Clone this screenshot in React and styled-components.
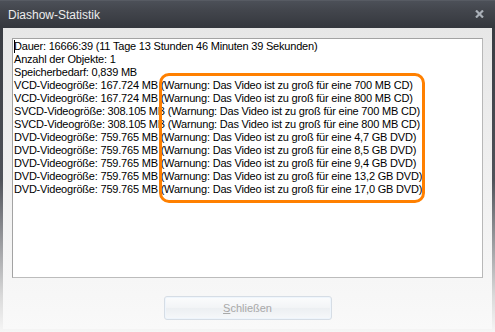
import React from "react";
import styled, { createGlobalStyle } from "styled-components";

const Global = createGlobalStyle`
  html, body { margin: 0; padding: 0; background: #ffffff; }
  body { width: 495px; height: 332px; overflow: hidden; }
`;

const Window = styled.div`
  width: 495px;
  height: 332px;
  display: flex;
  flex-direction: column;
  background: #3b3e45;
  font-family: "Liberation Sans", Arial, sans-serif;
`;

const TitleBar = styled.div`
  height: 28px;
  flex: none;
  display: flex;
  align-items: center;
  justify-content: space-between;
  padding: 0 9px 0 8px;
  box-sizing: border-box;
  background: linear-gradient(#62666e 0px, #4c5058 1px, #43464d 10px, #35383e 27px);
`;

const Title = styled.span`
  color: #ececec;
  font-size: 12px;
  padding-top: 2px;
`;

const CloseIcon = styled.svg`
  width: 9px;
  height: 8px;
  margin-right: 2px;
`;

const Frame = styled.div`
  flex: 1;
  display: flex;
  padding: 0 3px 3px 3px;
  background: linear-gradient(#393c42 0%, #50535a 50%, #d9d9d9 88%, #f6f6f6 100%);
  min-height: 0;
`;

const Body = styled.div`
  flex: 1;
  display: flex;
  flex-direction: column;
  align-items: center;
  padding: 10px 9px 9px 9px;
  background: linear-gradient(#e7e7e7, #f9f9f9);
`;

const TextBox = styled.div`
  position: relative;
  align-self: stretch;
  height: 240px;
  box-sizing: border-box;
  border: 1px solid #a3a3a3;
  border-right-color: #b8b8b8;
  border-bottom-color: #bcbcbc;
  background: #ffffff;
  padding: 1px 1px;
  font-size: 11px;
  letter-spacing: -0.2px;
  line-height: 13px;
  color: #000;
  overflow: hidden;
`;

const Line = styled.div`
  white-space: nowrap;
`;

const Caret = styled.span`
  display: inline-block;
  width: 0;
  height: 13px;
  border-left: 1px solid #000;
  margin-right: -1px;
  vertical-align: top;
`;

const Highlight = styled.div`
  position: absolute;
  left: 146px;
  top: 34px;
  width: 266px;
  height: 130px;
  box-sizing: border-box;
  border: 3px solid #ff8000;
  border-radius: 10px;
  pointer-events: none;
`;

const Button = styled.button`
  margin-top: 18px;
  width: 168px;
  height: 24px;
  box-sizing: border-box;
  border: 1px solid #d6dde5;
  border-radius: 3px;
  background: linear-gradient(#fbfcfd, #f2f4f6 50%, #eceff2 51%, #f6f8fa);
  box-shadow: inset 0 0 0 1px #eef5fc;
  color: #a8a8a8;
  font-family: "Liberation Sans", Arial, sans-serif;
  font-size: 11px;
  padding: 0;
  cursor: default;
`;

const Mnemonic = styled.span`
  text-decoration: underline;
`;

const lines = [
  "Anzahl der Objekte: 1",
  "Speicherbedarf: 0,839 MB",
  "VCD-Videogröße: 167.724 MB (Warnung: Das Video ist zu groß für eine 700 MB CD)",
  "VCD-Videogröße: 167.724 MB (Warnung: Das Video ist zu groß für eine 800 MB CD)",
  "SVCD-Videogröße: 308.105 MB (Warnung: Das Video ist zu groß für eine 700 MB CD)",
  "SVCD-Videogröße: 308.105 MB (Warnung: Das Video ist zu groß für eine 800 MB CD)",
  "DVD-Videogröße: 759.765 MB (Warnung: Das Video ist zu groß für eine 4,7 GB DVD)",
  "DVD-Videogröße: 759.765 MB (Warnung: Das Video ist zu groß für eine 8,5 GB DVD)",
  "DVD-Videogröße: 759.765 MB (Warnung: Das Video ist zu groß für eine 9,4 GB DVD)",
  "DVD-Videogröße: 759.765 MB (Warnung: Das Video ist zu groß für eine 13,2 GB DVD)",
  "DVD-Videogröße: 759.765 MB (Warnung: Das Video ist zu groß für eine 17,0 GB DVD)",
];

export default function App() {
  return (
    <>
      <Global />
      <Window>
        <TitleBar>
          <Title>Diashow-Statistik</Title>
          <CloseIcon viewBox="0 0 9 8">
            <path d="M1 0.5 L8 7.5 M8 0.5 L1 7.5" stroke="#aab0b8" strokeWidth="2.2" />
          </CloseIcon>
        </TitleBar>
        <Frame>
          <Body>
            <TextBox>
              <Line>
                <Caret />
                Dauer: 16666:39 (11 Tage 13 Stunden 46 Minuten 39 Sekunden)
              </Line>
              {lines.map((l, i) => (
                <Line key={i}>{l}</Line>
              ))}
              <Highlight />
            </TextBox>
            <Button disabled>
              <Mnemonic>S</Mnemonic>chließen
            </Button>
          </Body>
        </Frame>
      </Window>
    </>
  );
}
